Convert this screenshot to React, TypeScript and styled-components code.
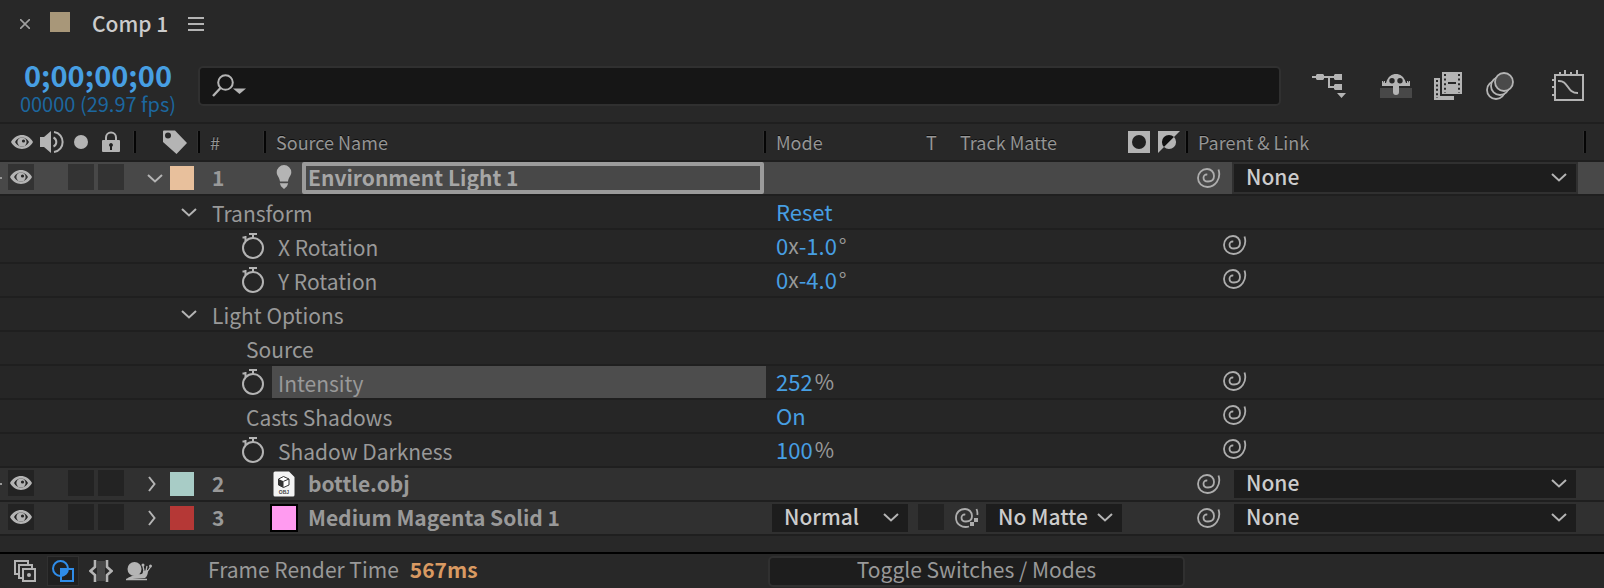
import React from "react";
import styled, { createGlobalStyle } from "styled-components";

const color = {
  panel: "#282828",
  row: "#262626",
  layer: "#303030",
  selected: "#484848",
  highlight: "#4d4d4d",
  line: "#1f1f1f",
  well: "#1d1d1d",
  icon: "#b4b4b4",
  text: "#999999",
  bright: "#cccccc",
  blue: "#479fe3",
  blueDim: "#1c679f",
};

const Global = createGlobalStyle`
  * { box-sizing: border-box; }
  body { margin: 0; background: ${color.panel}; }
  body, button, input, select {
    font-family: "Noto Sans CJK SC", "Noto Sans", sans-serif;
    font-size: 21px;
    line-height: 28px;
    color: ${color.text};
  }
  svg { display: block; flex: none; }
`;

const Panel = styled.main`
  display: flex;
  flex-direction: column;
  min-height: 100vh;
  background: ${color.panel};
  overflow: hidden;
  border-bottom-left-radius: 8px;
`;

const IconButton = styled.button`
  display: flex;
  align-items: center;
  justify-content: center;
  flex: none;
  padding: 0;
  border: 0;
  background: none;
  color: ${color.icon};
`;

/* ---------- tab bar and tool bar ---------- */

const TabBar = styled.header`
  display: flex;
  align-items: center;
  height: 48px;
  padding: 0 20px;
`;

const TabSwatch = styled.span`
  width: 20px;
  height: 20px;
  margin: 0 22px 4px 20px;
  background: #a89779;
`;

const TabTitle = styled.h1`
  margin: 0 20px 2px 0;
  font-size: 21px;
  font-weight: 500;
  color: ${color.bright};
`;

const ToolBar = styled.div`
  display: flex;
  align-items: center;
  height: 76px;
  padding: 2px 20px 0;
  border-bottom: 2px solid ${color.line};
`;

const TimeBlock = styled.div`
  display: flex;
  flex-direction: column;
  align-items: center;
  flex: none;
  width: 156px;
  margin-right: 22px;
  padding-top: 6px;
`;

const Timecode = styled.button`
  padding: 0;
  border: 0;
  background: none;
  font-size: 29px;
  font-weight: 700;
  line-height: 30px;
  color: ${color.blue};
`;

const FrameInfo = styled.span`
  font-size: 20px;
  line-height: 30px;
  white-space: nowrap;
  color: ${color.blueDim};
`;

const Search = styled.label`
  display: flex;
  align-items: center;
  flex: 1;
  height: 40px;
  padding: 0 12px;
  gap: 8px;
  border: 2px solid #303030;
  border-radius: 5px;
  background: #161616;
  color: ${color.icon};
`;

const SearchInput = styled.input.attrs({ type: "text", "aria-label": "Search layers" })`
  flex: 1;
  min-width: 0;
  border: 0;
  outline: 0;
  background: none;
`;

const Tools = styled.div`
  display: flex;
  align-items: center;
  gap: 22px;
  padding-left: 31px;
`;

const ToolButton = styled(IconButton)<{ $before?: number }>`
  margin-left: ${(p) => p.$before ?? 0}px;
`;

/* ---------- layer table ---------- */

const Table = styled.table`
  width: 100%;
  table-layout: fixed;
  border-collapse: separate;
  border-spacing: 0;
`;

const Col = styled.col<{ $w?: number }>`
  width: ${(p) => (p.$w ? `${p.$w}px` : "auto")};
`;

const Th = styled.th`
  padding: 0;
  border-bottom: 2px solid ${color.line};
  font-size: 18px;
  font-weight: 400;
  text-align: left;
  white-space: nowrap;
  color: #959595;
  text-shadow: 0 -1px #0c0c0c;
`;

const HeadCell = styled.div<{ $left?: number; $right?: number; $gap?: number }>`
  display: flex;
  align-items: center;
  gap: ${(p) => p.$gap ?? 0}px;
  height: 36px;
  padding: 0 ${(p) => p.$right ?? 0}px 0 ${(p) => p.$left ?? 0}px;
  color: inherit;

  > svg { color: ${color.icon}; }
`;

const Divider = styled.span`
  width: 3px;
  height: 22px;
  margin-left: auto;
  border-left: 1px solid #303030;
  background: #050505;
`;

const HeadLabel = styled.span<{ $w?: number }>`
  width: ${(p) => (p.$w ? `${p.$w}px` : "auto")};
`;

const Row = styled.tr<{ $kind: "layer" | "selected" | "property" }>`
  background: ${(p) =>
    p.$kind === "selected" ? color.selected : p.$kind === "layer" ? color.layer : color.row};
  --box: ${(p) => (p.$kind === "selected" ? "#333333" : "#232323")};
`;

const Td = styled.td`
  padding: 0;
  border-bottom: 2px solid ${color.line};
`;

const Cell = styled.div<{ $left?: number; $right?: number; $gap?: number }>`
  display: flex;
  align-items: center;
  gap: ${(p) => p.$gap ?? 0}px;
  height: 32px;
  padding: 0 ${(p) => p.$right ?? 0}px 0 ${(p) => p.$left ?? 0}px;
  white-space: nowrap;
`;

const Gutter = styled.span<{ $mark: boolean }>`
  width: 8px;
  height: 2px;
  border-left: 2px solid ${(p) => (p.$mark ? color.text : "transparent")};
`;

const SwitchBox = styled(IconButton)`
  width: 26px;
  height: 26px;
  margin-bottom: 2px;
  background: var(--box);
`;

const AudioGap = styled.span`
  width: 26px;
`;

const Swatch = styled.button<{ $color: string; $outlined?: boolean }>`
  flex: none;
  width: ${(p) => (p.$outlined ? 28 : 24)}px;
  height: ${(p) => (p.$outlined ? 28 : 24)}px;
  padding: 0;
  border: ${(p) => (p.$outlined ? "2px solid #000" : "0")};
  background: ${(p) => p.$color};
`;

const Twirl = styled(IconButton)<{ $closed?: boolean }>`
  justify-content: ${(p) => (p.$closed ? "flex-start" : "center")};
  width: 14px;
  height: 24px;
`;

const LayerText = styled.span`
  padding-bottom: 2px;
  font-weight: 700;
`;

const IconSlot = styled.span`
  display: flex;
  justify-content: center;
  flex: none;
  width: 28px;
`;

const LayerName = styled(LayerText)`
  padding-left: 6px;
`;

const NameInput = styled.input`
  flex: 1;
  min-width: 0;
  height: 32px;
  padding: 0 2px 2px;
  border: 4px solid #9b9b9b;
  border-radius: 2px;
  outline: 0;
  background: none;
  font-weight: 700;
  color: #a6a6a6;
`;

const PropertyLabel = styled.span<{ $on?: boolean }>`
  flex: 1;
  height: 32px;
  padding-left: 6px;
  line-height: 34px;
  background: ${(p) => (p.$on ? color.highlight : "none")};
`;

const Value = styled.button`
  padding: 0;
  border: 0;
  background: none;
  font-size: 22px;
  color: ${color.blue};
`;

const ValueLine = styled(Cell)`
  padding-bottom: 3px;
`;

const Unit = styled.span`
  padding-left: 2px;
`;

const SelectBox = styled.span<{ $w?: number }>`
  position: relative;
  display: flex;
  align-items: flex-start;
  flex: ${(p) => (p.$w ? "none" : "1")};
  width: ${(p) => (p.$w ? `${p.$w}px` : "auto")};
  height: 32px;
  border: 2px solid ${color.layer};
  background: ${color.well};
  color: ${color.bright};

  > svg {
    position: absolute;
    right: 9px;
    top: 9px;
    pointer-events: none;
  }
`;

const SelectInput = styled.select`
  appearance: none;
  width: 100%;
  height: 34px;
  margin: -5px 0 0;
  padding: 0 12px;
  border: 0;
  outline: 0;
  background: none;
  font-weight: 500;
  color: inherit;
`;

/* ---------- footer ---------- */

const Footer = styled.footer`
  display: flex;
  align-items: center;
  height: 36px;
  margin-top: auto;
  border-top: 2px solid #000;
`;

const FooterLeft = styled.div`
  display: flex;
  align-items: center;
  flex: none;
  width: 768px;
  padding-left: 14px;
`;

const PaneButton = styled(IconButton)<{ $active?: boolean }>`
  width: 32px;
  height: 30px;
  margin-left: ${(p) => (p.$active ? 11 : 6)}px;
  border: 1px solid ${(p) => (p.$active ? "#303030" : "transparent")};
  background: ${(p) => (p.$active ? "#202020" : "none")};
`;

const RenderTime = styled.span`
  margin-left: 53px;
  padding-bottom: 4px;
`;

const Milliseconds = styled.strong`
  margin-left: 11px;
  color: #d99a62;
`;

const ToggleButton = styled.button`
  flex: none;
  width: 417px;
  height: 31px;
  padding: 0 0 4px;
  border: 2px solid #303030;
  border-radius: 5px;
  background: ${color.well};
  line-height: 22px;
`;

/* ---------- icons ---------- */

const Chevron = ({ right }: { right?: boolean }) =>
  right ? (
    <svg width="8" height="16" viewBox="0 0 8 16" fill="none" stroke="#b4b4b4" strokeWidth="2">
      <path d="M1 1l5.500 7L1 15" />
    </svg>
  ) : (
    <svg width="16" height="9" viewBox="0 0 16 9" fill="none" stroke="#b4b4b4" strokeWidth="2">
      <path d="M1 1l7 6.500L15 1" />
    </svg>
  );

const Eye = () => (
  <svg width="22" height="14" viewBox="0 0 22 14">
    <path fill="currentColor" fillRule="evenodd" d="M0 7C5-2.300 17-2.300 22 7 17 16.300 5 16.300 0 7zm4 0c1.600 2.800 4 4.500 7 4.500S16.400 9.800 18 7c-1.600-2.800-4-4.500-7-4.500S5.600 4.200 4 7z" />
    <circle cx="11" cy="7" r="4.600" fill="currentColor" />
    <circle cx="12.500" cy="6" r="1.600" fill="#262626" />
  </svg>
);

const Speaker = () => (
  <svg width="24" height="24" viewBox="0 0 24 24" fill="none" stroke="currentColor" strokeWidth="2">
    <path d="M0 7h4l7-6v22l-7-6H0z" fill="currentColor" stroke="none" />
    <path d="M13.500 7.500a5 5 0 010 9M14 2c11.500 1.500 11.500 18.500 0 20" />
  </svg>
);

const Dot = () => (
  <svg width="20" height="14" viewBox="0 0 20 14">
    <circle cx="10" cy="7" r="7" fill="currentColor" />
  </svg>
);

const Lock = () => (
  <svg width="26" height="22" viewBox="-4 0 26 22">
    <path d="M4 10V6.500a5 5 0 0110 0V10" fill="none" stroke="currentColor" strokeWidth="2" />
    <rect y="9" width="18" height="12" rx="1" fill="currentColor" />
    <path d="M9 12a2 2 0 011 3.700V19H8v-3.300A2 2 0 019 12z" fill="#202020" />
  </svg>
);

const Tag = () => (
  <svg width="24" height="24" viewBox="0 0 24 24">
    <path fill="currentColor" fillRule="evenodd" d="M0 1.500Q0 .5 1 .5h11L24 13 13.500 24 0 12zM5 2.500a3 3 0 100 6 3 3 0 000-6z" />
  </svg>
);

const MatteHole = () => (
  <svg width="22" height="22" viewBox="0 0 22 22">
    <rect width="22" height="22" fill="currentColor" />
    <circle cx="11" cy="11" r="7" fill="#202020" />
  </svg>
);

const MatteInvert = () => (
  <svg width="22" height="22" viewBox="0 0 22 22">
    <path d="M0 0h22L0 22z" fill="currentColor" />
    <path d="M16 6A7 7 0 006 16z" fill="#111" />
    <path d="M16 6A7 7 0 016 16z" fill="currentColor" />
  </svg>
);

const Bulb = () => (
  <svg width="16" height="26" viewBox="0 0 16 26">
    <path d="M8 0a7.300 7.300 0 017.300 7.300c0 3.200-2.800 5-3.300 9.200H4C3.500 12.300.7 10.500.7 7.300A7.300 7.300 0 018 0zM3.800 18.300h8.400l-1.200 3L8 24l-3-2.700z" fill="#b4b4b4" />
  </svg>
);

const ObjFile = () => (
  <svg width="22" height="26" viewBox="0 0 22 26">
    <path d="M2 .5h14l5.500 5.500v18a1.500 1.500 0 01-1.500 1.500H2A1.500 1.500 0 01.5 24V2A1.500 1.500 0 012 .5z" fill="#f4f4f4" />
    <path d="M5.500 8l5-2.500 5.500 2.500v6l-5.500 2.500-5-2.500z" fill="#fff" stroke="#333" />
    <path d="M5.500 8l5 2.300v6.200l-5-2.500z" fill="#333" />
    <path d="M10.500 10.300L16 8" stroke="#333" />
    <text x="11" y="22.500" textAnchor="middle" fontSize="5" fontFamily="Liberation Sans" fontWeight="700" fill="#444">OBJ</text>
  </svg>
);

const Stopwatch = () => (
  <svg width="22" height="26" viewBox="0 0 22 26" fill="none" stroke="currentColor" strokeWidth="2">
    <circle cx="11" cy="15" r="10" />
    <path d="M7 1h8M11 1v4M.5 4.500h3M3.500 3v5" />
  </svg>
);

const PickWhip = () => (
  <svg width="24" height="20" viewBox="0 0 24 20" fill="none" stroke="#adadad" strokeWidth="1.800">
    <path d="M21.500 1.500C24.500 11 18 19 10.500 19 5 19 1 15 1 10s4-9 9-9c4 0 7 3 7 7s-3 5.500-6 5.500S6.500 12 6.500 9.700 8.300 6.200 10.300 6.600" />
  </svg>
);

const MattePick = () => (
  <svg width="24" height="20" viewBox="0 0 24 20" fill="none" stroke="#adadad" strokeWidth="1.800">
    <path d="M14 18.500C7 20.500 1 16 1 10s4-9 9-9c4 0 7 3 7 7s-3 5.500-6 5.500S6.500 12 6.500 9.700 8.300 6.200 10.300 6.600M21.500 1q1.300 3 .8 6" />
    <path d="M19 10h4v4h-4zM15 14h4v4h-4z" fill="#adadad" stroke="none" />
  </svg>
);

const SearchIcon = () => (
  <svg width="34" height="24" viewBox="0 0 34 24" fill="none" stroke="currentColor" strokeWidth="2">
    <circle cx="13.500" cy="8.500" r="7.300" />
    <path d="M8.500 14L1 22" strokeWidth="2.400" />
    <path d="M21 14.500h13l-6.500 5.500z" fill="currentColor" stroke="none" />
  </svg>
);

const Flowchart = () => (
  <svg width="34" height="26" viewBox="0 0 34 26" fill="none" stroke="currentColor" strokeWidth="2">
    <path d="M0 4h24M17 4v10h6" />
    <path d="M5 1h6l1 1v4l-1 1H5L4 6V2zM23 1h7v6h-7l-1-1V2zM23 11h7v6h-7l-1-1v-4zM25 20h9l-4.500 5z" fill="currentColor" stroke="none" />
  </svg>
);

const Shy = () => (
  <svg width="32" height="26" viewBox="0 0 32 26">
    <rect y="15" width="32" height="10" fill="#484848" />
    <path fill="currentColor" fillRule="evenodd" d="M6 10C8 3 12 1 16 1s8 2 10 9h1V8h1v2l1-2h1v5H19v6q0 3-3 3t-3-3v-6H2V8h1l1 2V8h1v2zM12 5a2.700 2.700 0 100 5.400A2.700 2.700 0 0012 5zm8 0a2.700 2.700 0 100 5.400A2.700 2.700 0 0020 5z" />
  </svg>
);

const Film = () => (
  <svg width="28" height="28" viewBox="0 0 28 28">
    <path d="M0 6h6v18h14v4H0z" fill="currentColor" />
    <path d="M3 8v18" stroke="#282828" strokeWidth="2" strokeDasharray="2 2.400" />
    <rect x="8" width="20" height="22" fill="currentColor" />
    <path d="M11 2v19M25 2v19" stroke="#282828" strokeWidth="2" strokeDasharray="2 2.600" />
    <path d="M14 11h8" stroke="#282828" strokeWidth="2" />
  </svg>
);

const MotionBlur = () => (
  <svg width="28" height="28" viewBox="0 0 28 28" stroke="currentColor" strokeWidth="1.800">
    <circle cx="10" cy="18" r="9" fill="#282828" />
    <circle cx="14" cy="14" r="9" fill="#282828" />
    <circle cx="18" cy="10" r="9" fill="#4a4a4a" />
  </svg>
);

const GraphEditor = () => (
  <svg width="32" height="32" viewBox="0 0 32 32" fill="none" stroke="currentColor" strokeWidth="2">
    <path d="M3 5h28v25H3zM8 2v3M13 0v4M19 2v3M25 0v4M0 10h3M0 17h3M0 25h3" />
    <path d="M6 11c11-1 8 12 20 12" />
  </svg>
);

const Frames = () => (
  <svg width="22" height="22" viewBox="0 0 22 22" fill="none" stroke="currentColor" strokeWidth="2">
    <path d="M5 14H1V1h13v4M9 18H5V5h13v4M9 9h12v12H9z" />
    <circle cx="15" cy="15" r="2" fill="currentColor" stroke="none" />
  </svg>
);

const Modes = () => (
  <svg width="22" height="22" viewBox="0 0 22 22" fill="none" stroke="#2f8ce8" strokeWidth="2">
    <path d="M9 9h12v12H9z" />
    <path d="M9 9h6a7 7 0 01-6 6.500z" fill="#2f8ce8" />
    <circle cx="8.500" cy="8.500" r="7.500" />
  </svg>
);

const Braces = () => (
  <svg width="24" height="22" viewBox="0 0 24 22" fill="none" stroke="currentColor" strokeWidth="2.600">
    <path d="M8 1h8v20H8z" fill="#484848" stroke="none" />
    <path d="M6 0v7l-4.500 4L6 15v7M18 0v7l4.500 4-4.500 4v7" />
  </svg>
);

const Snail = () => (
  <svg width="26" height="20" viewBox="0 0 26 20" fill="none" stroke="currentColor">
    <circle cx="8.500" cy="8" r="7" fill="currentColor" stroke="none" />
    <path d="M0 18.500Q2 16 6 15l7-2q4 1 4-3l5-1q0 6-3 8z" fill="currentColor" stroke="none" />
    <path d="M0 18.500h21" strokeWidth="1.500" />
    <path d="M18 10l-1-5M20 10l1-5M21 11l3.500-5" strokeWidth="1.300" />
    <circle cx="17" cy="4" r="1.500" fill="currentColor" stroke="none" />
    <circle cx="24.500" cy="5" r="1.500" fill="currentColor" stroke="none" />
  </svg>
);

/* ---------- pieces ---------- */

function Dropdown({ label, value, width }: { label: string; value: string; width?: number }) {
  return (
    <SelectBox $w={width}>
      <SelectInput aria-label={label} defaultValue={value}>
        <option>{value}</option>
      </SelectInput>
      <Chevron />
    </SelectBox>
  );
}

type Layer = {
  index: number;
  name: string;
  label: string;
  icon: React.ReactNode;
  open?: boolean;
  mark?: boolean;
  modes?: boolean;
};

function LayerRow({ layer }: { layer: Layer }) {
  const { index, name, label, icon, open = false, mark = false, modes = false } = layer;
  return (
    <Row $kind={open ? "selected" : "layer"}>
      <Td>
        <Cell>
          <Gutter $mark={mark} />
          <SwitchBox aria-label={`${name} visibility`}><Eye /></SwitchBox>
          <Cell $left={4} $gap={4}>
            <AudioGap />
            <SwitchBox aria-label={`${name} solo`} />
            <SwitchBox aria-label={`${name} lock`} />
          </Cell>
        </Cell>
      </Td>
      <Td>
        <Cell $left={12} $gap={8}>
          <Twirl $closed={!open} aria-label={`Expand ${name}`} aria-expanded={open}><Chevron right={!open} /></Twirl>
          <Swatch $color={label} aria-label={`${name} label colour`} />
        </Cell>
      </Td>
      <Td><Cell $left={12}><LayerText>{index}</LayerText></Cell></Td>
      <Td>
        <Cell $left={4} $right={2} $gap={4}>
          <IconSlot>{icon}</IconSlot>
          {open ? <NameInput aria-label="Layer name" defaultValue={name} /> : <LayerName>{name}</LayerName>}
        </Cell>
      </Td>
      <Td>
        {modes && (
          <Cell $left={4} $gap={8}>
            <Dropdown label="Blending mode" value="Normal" width={140} />
            <SwitchBox aria-label="Preserve transparency" />
            <Cell $left={3} $gap={5}>
              <IconButton aria-label="Pick track matte"><MattePick /></IconButton>
              <Dropdown label="Track matte" value="No Matte" width={140} />
            </Cell>
          </Cell>
        )}
      </Td>
      <Td>
        <Cell $left={9} $right={26} $gap={11}>
          <IconButton aria-label={`${name} parent pick whip`}><PickWhip /></IconButton>
          <Dropdown label={`${name} parent`} value="None" />
        </Cell>
      </Td>
    </Row>
  );
}

type Property = {
  name: string;
  group?: boolean;
  timed?: boolean;
  active?: boolean;
  linked?: boolean;
  value?: React.ReactNode;
};

function PropertyRow({ property }: { property: Property }) {
  const { name, group, timed, active, linked, value } = property;
  return (
    <Row $kind="property">
      <Td colSpan={4}>
        <Cell $left={group ? 182 : timed ? 242 : 240} $gap={group ? 10 : 8}>
          {group && <Twirl aria-label={`Collapse ${name}`} aria-expanded><Chevron /></Twirl>}
          {timed && <IconButton aria-label={`Animate ${name}`}><Stopwatch /></IconButton>}
          <PropertyLabel $on={active}>{name}</PropertyLabel>
        </Cell>
      </Td>
      <Td><ValueLine $left={10}>{value}</ValueLine></Td>
      <Td>
        <ValueLine $left={35}>
          {linked && <IconButton aria-label={`${name} pick whip`}><PickWhip /></IconButton>}
        </ValueLine>
      </Td>
    </Row>
  );
}

const properties: Property[] = [
  { name: "Transform", group: true, value: <Value>Reset</Value> },
  { name: "X Rotation", timed: true, linked: true, value: <><Value>0</Value>x<Value>-1.0</Value><Unit>°</Unit></> },
  { name: "Y Rotation", timed: true, linked: true, value: <><Value>0</Value>x<Value>-4.0</Value><Unit>°</Unit></> },
  { name: "Light Options", group: true },
  { name: "Source" },
  { name: "Intensity", timed: true, active: true, linked: true, value: <><Value>252</Value><Unit>%</Unit></> },
  { name: "Casts Shadows", linked: true, value: <Value>On</Value> },
  { name: "Shadow Darkness", timed: true, linked: true, value: <><Value>100</Value><Unit>%</Unit></> },
];

const light: Layer = { index: 1, name: "Environment Light 1", label: "#e8c09c", icon: <Bulb />, open: true, mark: true };
const bottle: Layer = { index: 2, name: "bottle.obj", label: "#a8ccc6", icon: <ObjFile />, mark: true };
const solid: Layer = {
  index: 3,
  name: "Medium Magenta Solid 1",
  label: "#b53836",
  icon: <Swatch as="span" $color="#ff9bf0" $outlined />,
  modes: true,
};

export default function App() {
  return (
    <Panel>
      <Global />
      <TabBar>
        <IconButton aria-label="Close tab">
          <svg width="10" height="10" viewBox="0 0 10 10" stroke="#a0a0a0" strokeWidth="1.600">
            <path d="M0 0l10 10M10 0L0 10" />
          </svg>
        </IconButton>
        <TabSwatch />
        <TabTitle>Comp 1</TabTitle>
        <IconButton aria-label="Panel menu">
          <svg width="16" height="14" viewBox="0 0 16 14" stroke="currentColor" strokeWidth="2">
            <path d="M0 1h16M0 7h16M0 13h16" />
          </svg>
        </IconButton>
      </TabBar>
      <ToolBar>
        <TimeBlock>
          <Timecode>0;00;00;00</Timecode>
          <FrameInfo>00000 (29.97 fps)</FrameInfo>
        </TimeBlock>
        <Search>
          <SearchIcon />
          <SearchInput />
        </Search>
        <Tools>
          <ToolButton aria-label="Flowchart"><Flowchart /></ToolButton>
          <ToolButton aria-label="Hide shy layers" $before={12}><Shy /></ToolButton>
          <ToolButton aria-label="Frame blending"><Film /></ToolButton>
          <ToolButton aria-label="Motion blur" $before={2}><MotionBlur /></ToolButton>
          <ToolButton aria-label="Graph editor" $before={16}><GraphEditor /></ToolButton>
        </Tools>
      </ToolBar>
      <Table>
        <colgroup>
          <Col $w={136} />
          <Col $w={64} />
          <Col $w={66} />
          <Col $w={500} />
          <Col $w={422} />
          <Col />
        </colgroup>
        <thead>
          <tr>
            <Th><HeadCell $left={11} $gap={7}><Eye /><Speaker /><Dot /><Lock /><Divider /></HeadCell></Th>
            <Th><HeadCell $left={27}><Tag /><Divider /></HeadCell></Th>
            <Th><HeadCell $left={10}><HeadLabel>#</HeadLabel><Divider /></HeadCell></Th>
            <Th><HeadCell $left={10}><HeadLabel>Source Name</HeadLabel><Divider /></HeadCell></Th>
            <Th>
              <HeadCell $left={10}>
                <HeadLabel $w={150}>Mode</HeadLabel>
                <HeadLabel $w={34}>T</HeadLabel>
                <HeadLabel $w={168}>Track Matte</HeadLabel>
                <HeadCell $gap={8}><MatteHole /><MatteInvert /></HeadCell>
                <Divider />
              </HeadCell>
            </Th>
            <Th><HeadCell $left={10} $right={18}><HeadLabel>Parent &amp; Link</HeadLabel><Divider /></HeadCell></Th>
          </tr>
        </thead>
        <tbody>
          <LayerRow layer={light} />
          {properties.map((p) => <PropertyRow key={p.name} property={p} />)}
          <LayerRow layer={bottle} />
          <LayerRow layer={solid} />
        </tbody>
      </Table>
      <Footer>
        <FooterLeft>
          <IconButton aria-label="Layer switches pane"><Frames /></IconButton>
          <PaneButton $active aria-label="Transfer controls pane"><Modes /></PaneButton>
          <PaneButton aria-label="In and out pane"><Braces /></PaneButton>
          <PaneButton aria-label="Render time pane"><Snail /></PaneButton>
          <RenderTime>Frame Render Time<Milliseconds>567ms</Milliseconds></RenderTime>
        </FooterLeft>
        <ToggleButton>Toggle Switches / Modes</ToggleButton>
      </Footer>
    </Panel>
  );
}
